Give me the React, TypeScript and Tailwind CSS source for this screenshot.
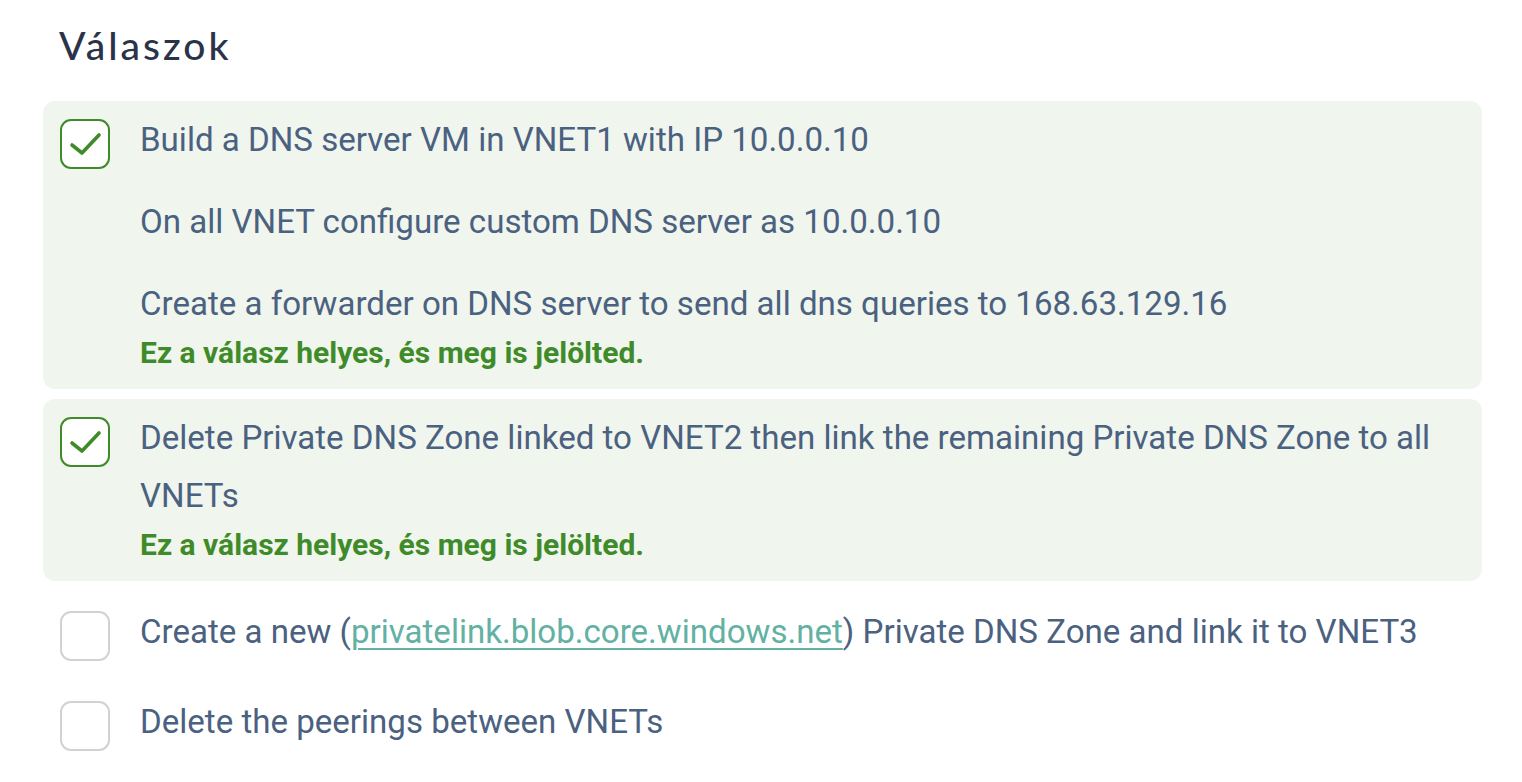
import type { ReactNode } from 'react';

type Answer = {
  id: number;
  checked: boolean;
  lines: ReactNode[];
};

const answers: Answer[] = [
  {
    id: 1,
    checked: true,
    lines: [
      'Build a DNS server VM in VNET1 with IP 10.0.0.10',
      'On all VNET configure custom DNS server as 10.0.0.10',
      'Create a forwarder on DNS server to send all dns queries to 168.63.129.16',
    ],
  },
  {
    id: 2,
    checked: true,
    lines: ['Delete Private DNS Zone linked to VNET2 then link the remaining Private DNS Zone to all VNETs'],
  },
  {
    id: 3,
    checked: false,
    lines: [
      <>
        Create a new (
        <a href="#" className="text-[#62b1a3] underline decoration-[1.5px] underline-offset-[5px]">
          privatelink.blob.core.windows.net
        </a>
        ) Private DNS Zone and link it to VNET3
      </>,
    ],
  },
  {
    id: 4,
    checked: false,
    lines: ['Delete the peerings between VNETs'],
  },
];

function CheckBox({ checked }: { checked: boolean }) {
  return (
    <div
      className={
        checked
          ? 'mt-[8px] h-[50px] w-[50px] shrink-0 rounded-[11px] border-2 border-[#3f8b2a] bg-white'
          : 'mt-[8px] h-[50px] w-[50px] shrink-0 rounded-[11px] border-2 border-[#d2d2d2] bg-white'
      }
    >
      {checked && (
        <svg viewBox="0 0 46 46" className="h-full w-full">
          <polyline
            points="10,24 20,32 37,14"
            fill="none"
            stroke="#3f8b2a"
            strokeWidth="3.6"
            strokeLinecap="round"
            strokeLinejoin="round"
          />
        </svg>
      )}
    </div>
  );
}

export default function App() {
  return (
    <div className="min-h-[782px] bg-white pl-[43px] pr-[40px] pt-[22px] font-['Roboto',sans-serif]">
      <h2 className="pl-[16px] font-['Lato',sans-serif] text-[39px] leading-[46px] font-medium tracking-[3px] text-[#2b3349]">
        Válaszok
      </h2>

      <div className="mt-[33px] flex flex-col gap-[10px]">
        {answers.map((a) => (
          <div
            key={a.id}
            className={
              a.checked
                ? 'flex gap-[30px] rounded-[12px] bg-[#f0f5ee] pl-[17px] pr-[20px] pt-[10px] pb-[16px]'
                : 'flex gap-[30px] rounded-[12px] pl-[17px] pr-[20px] pt-[12px] pb-[10px]'
            }
          >
            <CheckBox checked={a.checked} />
            <div className="flex-1 text-[33.1px] leading-[58px] text-[#4a6180]">
              {a.lines.map((line, i) => (
                <p key={i} className={i < a.lines.length - 1 ? 'mb-[24px]' : ''}>
                  {line}
                </p>
              ))}
              {a.checked && (
                <p className="text-[30px] leading-[40px] font-bold text-[#3f8b2a]">
                  Ez a válasz helyes, és meg is jelölted.
                </p>
              )}
            </div>
          </div>
        ))}
      </div>
    </div>
  );
}
